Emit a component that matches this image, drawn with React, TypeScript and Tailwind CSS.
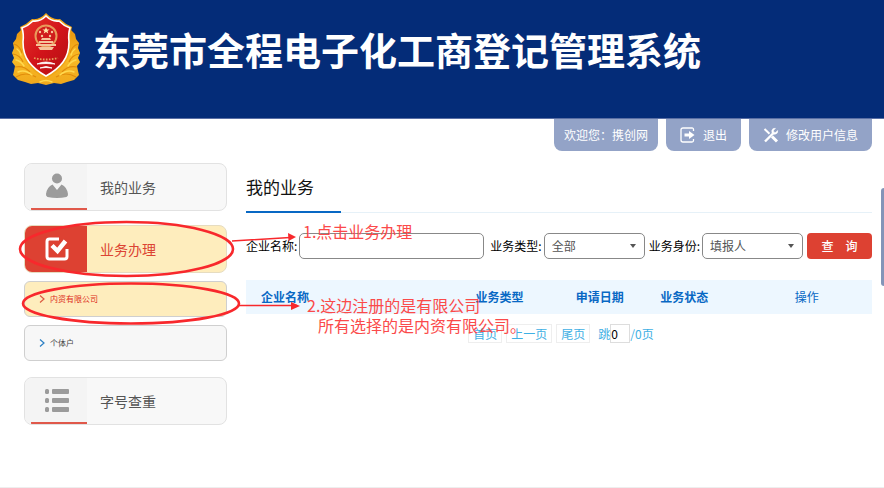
import { useState } from "react";
import type { ReactNode } from "react";

const headers = [
  { label: "企业名称", className: "w-[32%] pl-[15px] text-left" },
  { label: "业务类型", className: "w-[17%]" },
  { label: "申请日期", className: "w-[15%]" },
  { label: "业务状态", className: "w-[12%]" },
  { label: "操作", className: "w-[24%] pl-5 font-normal" },
];

const Emblem = () => (
  <svg viewBox="0 0 70 74" className="h-[74px] w-[70px] shrink-0">
    <defs>
      <linearGradient id="gold" x1="0" y1="0" x2="0" y2="1">
        <stop offset="0" stopColor="#e8930c" />
        <stop offset="0.5" stopColor="#f9bb26" />
        <stop offset="1" stopColor="#f0a81c" />
      </linearGradient>
      <linearGradient id="red" x1="0" y1="0" x2="1" y2="1">
        <stop offset="0" stopColor="#e8342a" />
        <stop offset="0.5" stopColor="#d2141a" />
        <stop offset="1" stopColor="#b10d12" />
      </linearGradient>
    </defs>
    {/* wheat wreath */}
    <path
      d="M11 16 6 21 5 26 2 30 3 35 1 40 3 45 1 49 4 53 3 58 2 62 7 67 14 69 20 71 27 70 35 72 43 70 50 71 56 69 63 67 68 62 67 58 66 53 69 49 67 45 69 40 67 35 68 30 65 26 64 21 59 16Z"
      fill="url(#gold)"
    />
    <g fill="none" stroke="#e08c0c" strokeWidth="1.2">
      <path d="M3 31q6 2 8 9M2 41q7 1 10 8M4 54q9-2 15 5M5 64q10-6 20 0" />
      <path d="M67 31q-6 2-8 9M68 41q-7 1-10 8M66 54q-9-2-15 5M65 64q-10-6-20 0" />
    </g>
    <g fill="none" stroke="#ffd94f" strokeWidth="1.500" strokeLinecap="round">
      <path d="M6 36q3 2 4 6M5 47q5 1 8 6M7 59q7-3 14 3M29 69q6-3 12 0" />
      <path d="M64 36q-3 2-4 6M65 47q-5 1-8 6M63 59q-7-3-14 3" />
    </g>
    {/* shield */}
    <path
      d="M35 0Q29 7 21 6 16 11 9 14 11 20 10 29 10 42 16 50 22 59 35 66 48 59 54 50 60 42 60 29 59 20 61 14 54 11 49 6 41 7 35 0Z"
      fill="#f0a519"
    />
    <path
      d="M35 3Q29 9 22 8 17 13 11 15 13 21 12 29 12 41 18 49 24 57 35 63 46 57 52 49 58 41 58 29 57 21 59 15 53 13 48 8 41 9 35 3Z"
      fill="url(#red)"
      stroke="#fff"
      strokeWidth="1.6"
    />
    {/* national badge */}
    <circle cx="35" cy="23" r="10.500" fill="#d01c1c" stroke="#e99a5a" strokeWidth="2" />
    <path
      d="m35 14 1 2.4 2.6.1-2.1 1.6.8 2.5-2.3-1.5-2.3 1.5.8-2.5-2.1-1.6 2.6-.1z"
      fill="#ffe6a8"
    />
    <g fill="#f6c39a">
      <circle cx="29" cy="19" r="1.200" />
      <circle cx="41" cy="19" r="1.200" />
      <circle cx="31" cy="23" r="1.200" />
      <circle cx="39" cy="23" r="1.200" />
      <path d="M31 25h8l1 2H30zM28 28h14v2H28zM25 31h20v2H25zM27 34h16l-2 3H29z" />
    </g>
    <path d="M23 45q12 3 24 0" fill="none" stroke="#e8a25e" strokeWidth="1.8" strokeDasharray="1.6 1.4" />
    <path d="M26 51q9-4 18 0-9-1-18 0M29 55q6-3 12 0-6-1-12 0" fill="#fff" stroke="#fff" strokeWidth="0.8" />
  </svg>
);

const UserIcon = () => (
  <svg viewBox="0 0 24 26" className="h-[26px] w-6" fill="#9b9b9b">
    <circle cx="12" cy="5.500" r="5" />
    <path d="M7.500 11.500 12 17l4.500-5.500Q22 14 23 21q.3 2-1.500 3-9.500 2-19 0Q.7 23 1 21q1-7 6.500-9.500Z" />
  </svg>
);

const CheckIcon = () => (
  <svg viewBox="0 0 24 24" className="h-6 w-6" fill="none" stroke="#fff">
    <path d="M14 2H4.500Q2 2 2 4.500v15Q2 22 4.500 22h15q2.500 0 2.500-2.500V12" strokeWidth="3" />
    <path d="m7 8.500 5.500 5.500L20.500 4" strokeWidth="4.500" />
  </svg>
);

const ListIcon = () => (
  <svg viewBox="0 0 24 24" className="h-6 w-6" fill="#9b9b9b">
    <rect x="0" y="1" width="4" height="5" rx="1.500" />
    <rect x="7" y="1" width="17" height="5" rx="1" />
    <rect x="0" y="10" width="4" height="5" rx="1.500" />
    <rect x="7" y="10" width="17" height="5" rx="1" />
    <rect x="0" y="19" width="4" height="5" rx="1.500" />
    <rect x="7" y="19" width="17" height="5" rx="1" />
  </svg>
);

const ExitIcon = () => (
  <svg viewBox="0 0 16 16" className="h-4 w-4" fill="none" stroke="#fff">
    <path d="M13.500 4V2.500Q13.500 1 12 1H3Q1 1 1 3v10q0 2 2 2h9q1.500 0 1.500-1.500V12" strokeWidth="1.300" />
    <path d="M4.500 6.500H9V4l5.500 4L9 12V9.500H4.500z" fill="#fff" stroke="none" />
  </svg>
);

const ToolsIcon = () => (
  <svg viewBox="0 0 16 16" className="h-4 w-4" fill="none" stroke="#fff">
    <path d="M2 14.500 10 6.500" strokeWidth="2.400" />
    <path
      d="M14.700 3.500 12.500 5.500 10.800 5.200 10.500 3.500 12.500 1.300Q9.500.8 8.800 3.500 8.500 7.500 12 7.300 15.300 6.500 14.700 3.500Z"
      fill="#fff"
      strokeWidth=".5"
    />
    <path d="m1.500 2 5 4.800" strokeWidth="2" />
    <path d="m9 9.500 5 5" strokeWidth="3" />
  </svg>
);

const TopButton = ({ icon, children }: { icon?: ReactNode; children: ReactNode }) => (
  <button
    className={`flex h-8 items-center gap-[7px] rounded-b-lg bg-[#93a3c7] text-white ${
      icon ? "px-[14px]" : "px-[10px]"
    }`}
  >
    {icon}
    {children}
  </button>
);

const MenuItem = ({
  icon,
  label,
  active,
}: {
  icon: ReactNode;
  label: string;
  active?: boolean;
}) => (
  <button
    className={`flex h-12 w-full overflow-hidden rounded-lg border text-left text-sm ${
      active
        ? "border-[#e6dcc0] bg-[#feedbd] text-[#dc4433]"
        : "border-[#e2e2e2] bg-[#f8f8f8] text-[#555]"
    }`}
  >
    <span
      className={`flex h-full w-[62px] flex-col items-center ${
        active ? "bg-[#dd4132]" : "bg-[#f4f4f4]"
      }`}
    >
      <span className="flex flex-1 items-center pl-[2px]">{icon}</span>
      {!active && <span className="ml-[6px] h-[2px] self-stretch bg-[#e0584a]" />}
    </span>
    <span className="self-center pl-[13px]">{label}</span>
  </button>
);

const SubItem = ({ label, active }: { label: string; active?: boolean }) => (
  <button
    className={`flex h-9 w-full items-center gap-[5px] rounded-md border border-[#cfcfcf] pl-[14px] text-[8px] ${
      active ? "bg-[#feedbd] text-[#dd2c20]" : "bg-[#f7f7f7] text-[#444]"
    }`}
  >
    <svg viewBox="0 0 6 8" className="h-2 w-[6px]" fill="none" stroke={active ? "#dc5a40" : "#2a7fc4"}>
      <path d="m1 .5 4 3.500-4 3.500" strokeWidth="1.200" />
    </svg>
    {label}
  </button>
);

const Picker = ({ id, label, options }: { id: string; label: string; options: string[] }) => (
  <div className="flex items-center gap-[2px]">
    <label htmlFor={id}>{label}</label>
    <div className="relative">
      <select
        id={id}
        className="h-[26px] w-[101px] appearance-none rounded-[5px] border border-[#888] bg-white pl-[7px] text-[#555]"
      >
        {options.map((option) => (
          <option key={option}>{option}</option>
        ))}
      </select>
      <svg
        viewBox="0 0 8 4"
        className="pointer-events-none absolute top-[11px] right-2 h-1 w-2"
        fill="#555"
      >
        <path d="M1 0h6L4 4z" />
      </svg>
    </div>
  </div>
);

const PageButton = ({ children }: { children: ReactNode }) => (
  <button className="h-[19px] border border-[#eee] px-1">{children}</button>
);

// red pen marks and notes drawn over the page
const Notes = () => (
  <div className="pointer-events-none absolute inset-0 text-base leading-[20px] text-[#fb4a4a]">
    <svg
      viewBox="0 0 884 488"
      className="absolute top-0 left-0 h-[488px] w-[884px]"
      fill="none"
      stroke="#f8282c"
    >
      <ellipse cx="126.500" cy="249" rx="106.500" ry="27" strokeWidth="2.600" />
      <ellipse cx="131" cy="303.500" rx="108" ry="20" strokeWidth="2.600" />
      <path d="m232 241 58-3.500M239 305.500h58" strokeWidth="1.500" />
      <path d="m296 237-8-4 .5 8zM300 306l-9-4v8z" fill="#f8282c" stroke="none" />
    </svg>
    <p className="absolute top-[221px] left-[303px] whitespace-nowrap">1.点击业务办理</p>
    <p className="absolute top-[295px] left-[307px] whitespace-nowrap">
      2.这边注册的是有限公司
      <br />
      <span className="pl-[11px]">所有选择的是内资有限公司。</span>
    </p>
  </div>
);

const App = () => {
  const [company, setCompany] = useState("");
  const [page, setPage] = useState("0");

  return (
    <div className="relative min-h-screen border-b border-[#eee] bg-white font-['Noto_Sans_CJK_SC',sans-serif] text-xs">
      <header className="flex h-[119px] items-start gap-3 border-b border-[#5a6fa5] bg-[#042c78] pt-[13px] pl-[11px]">
        <Emblem />
        <h1 className="pt-2 text-[38px] leading-[56px] font-bold whitespace-nowrap text-white">
          东莞市全程电子化工商登记管理系统
        </h1>
      </header>

      <nav className="flex justify-end gap-2 pr-3">
        <TopButton>欢迎您：携创网</TopButton>
        <TopButton icon={<ExitIcon />}>退出</TopButton>
        <TopButton icon={<ToolsIcon />}>修改用户信息</TopButton>
      </nav>

      <div className="flex gap-[19px] pt-3 pr-3 pl-6">
        <aside className="w-[203px] shrink-0">
          <MenuItem icon={<UserIcon />} label="我的业务" />
          <div className="mt-[14px]">
            <MenuItem icon={<CheckIcon />} label="业务办理" active />
          </div>
          <div className="mt-2 mb-4 flex flex-col gap-2">
            <SubItem label="内资有限公司" active />
            <SubItem label="个体户" />
          </div>
          <MenuItem icon={<ListIcon />} label="字号查重" />
        </aside>

        <main className="min-w-0 flex-1">
          <div className="flex h-[50px] border-b border-[#e6f1f8]">
            <h2 className="-mb-px flex w-[95px] items-center border-b-2 border-[#0868c4] text-[17px] text-[#111]">
              我的业务
            </h2>
          </div>

          <form className="flex items-center gap-1 pt-5" onSubmit={(e) => e.preventDefault()}>
            <div className="flex flex-1 items-center gap-[2px] pr-[2px]">
              <label htmlFor="company" className="shrink-0">
                企业名称:
              </label>
              <input
                id="company"
                value={company}
                onChange={(e) => setCompany(e.target.value)}
                className="h-[26px] w-full min-w-0 rounded-[5px] border border-[#888] px-2"
              />
            </div>
            <Picker id="type" label="业务类型:" options={["全部"]} />
            <Picker id="role" label="业务身份:" options={["填报人"]} />
            <button className="h-[26px] w-[65px] rounded-[4px] bg-[#dd4132] font-medium whitespace-pre text-white">
              查　询
            </button>
          </form>

          <table className="mt-[21px] w-full table-fixed text-[#0868c4]">
            <thead>
              <tr className="h-[34px] bg-[#edf7ff]">
                {headers.map((header) => (
                  <th key={header.label} className={header.className}>
                    {header.label}
                  </th>
                ))}
              </tr>
            </thead>
          </table>

          <div className="flex items-center justify-center gap-1 pt-[10px] pl-1 text-[#3fb0e4]">
            <PageButton>首页</PageButton>
            <PageButton>上一页</PageButton>
            <PageButton>尾页</PageButton>
            <label htmlFor="page" className="pl-1">
              跳
            </label>
            <input
              id="page"
              value={page}
              onChange={(e) => setPage(e.target.value)}
              className="-ml-1 h-[19px] w-5 border border-[#ddd] text-black"
            />
            <span className="-ml-1">/0页</span>
          </div>
        </main>
      </div>

      <div className="absolute top-[188px] right-0 h-[98px] w-[3px] rounded-l-sm bg-[#8394b8]" />
      <Notes />
    </div>
  );
};

export default App;
